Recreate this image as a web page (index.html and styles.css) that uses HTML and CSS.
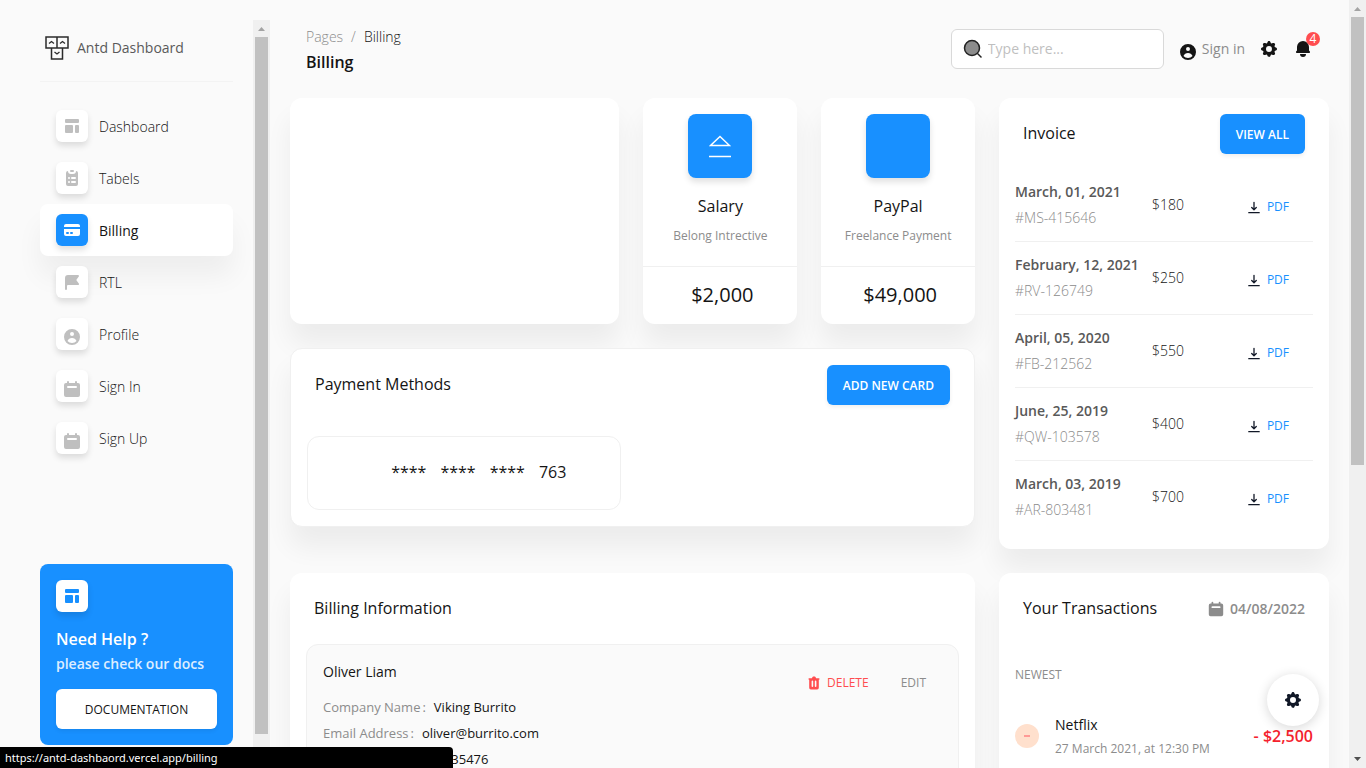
FILE: index.html
```html
<!DOCTYPE html>
<html lang="en">
<head>
<meta charset="utf-8">
<meta name="viewport" content="width=device-width, initial-scale=1">
<title>Antd Dashboard - Billing</title>
<link rel="stylesheet" href="styles.css">
</head>
<body>
<svg class="sprite" aria-hidden="true">
  <symbol id="i-dash" viewBox="0 0 20 20"><path d="M3 4a1 1 0 0 1 1-1h12a1 1 0 0 1 1 1v2a1 1 0 0 1-1 1H4a1 1 0 0 1-1-1zM3 10a1 1 0 0 1 1-1h6a1 1 0 0 1 1 1v6a1 1 0 0 1-1 1H4a1 1 0 0 1-1-1zM14 9a1 1 0 0 0-1 1v6a1 1 0 0 0 1 1h2a1 1 0 0 0 1-1v-6a1 1 0 0 0-1-1z"/></symbol>
  <symbol id="i-table" viewBox="0 0 20 20"><path d="M9 2a1 1 0 0 0 0 2h2a1 1 0 1 0 0-2z"/><path fill-rule="evenodd" d="M4 5a2 2 0 0 1 2-2 3 3 0 0 0 3 3h2a3 3 0 0 0 3-3 2 2 0 0 1 2 2v11a2 2 0 0 1-2 2H6a2 2 0 0 1-2-2zm3 4a1 1 0 0 0 0 2h.01a1 1 0 1 0 0-2zm3 0a1 1 0 0 0 0 2h3a1 1 0 1 0 0-2zm-3 4a1 1 0 1 0 0 2h.01a1 1 0 1 0 0-2zm3 0a1 1 0 1 0 0 2h3a1 1 0 1 0 0-2z"/></symbol>
  <symbol id="i-card" viewBox="0 0 20 20"><path fill-rule="evenodd" d="M4 4a2 2 0 0 0-2 2v1h16V6a2 2 0 0 0-2-2zM18 9H2v5a2 2 0 0 0 2 2h12a2 2 0 0 0 2-2zM4 13a1 1 0 0 1 1-1h1a1 1 0 1 1 0 2H5a1 1 0 0 1-1-1zm5-1a1 1 0 1 0 0 2h1a1 1 0 1 0 0-2z"/></symbol>
  <symbol id="i-flag" viewBox="0 0 20 20"><path fill-rule="evenodd" d="M3 6a3 3 0 0 1 3-3h10a1 1 0 0 1 .8 1.6L14.25 8l2.55 3.4A1 1 0 0 1 16 13H6a1 1 0 0 0-1 1v3a1 1 0 1 1-2 0z"/></symbol>
  <symbol id="i-user" viewBox="0 0 20 20"><path fill-rule="evenodd" d="M18 10a8 8 0 1 1-16 0 8 8 0 0 1 16 0zm-6-3a2 2 0 1 1-4 0 2 2 0 0 1 4 0zm-2 4a5 5 0 0 0-4.55 2.92A6 6 0 0 0 10 16a6 6 0 0 0 4.55-2.08A5 5 0 0 0 10 11z"/></symbol>
  <symbol id="i-cal" viewBox="0 0 20 20"><path fill-rule="evenodd" d="M6 2a1 1 0 0 0-1 1v1H4a2 2 0 0 0-2 2v10a2 2 0 0 0 2 2h12a2 2 0 0 0 2-2V6a2 2 0 0 0-2-2h-1V3a1 1 0 1 0-2 0v1H7V3a1 1 0 0 0-1-1zm0 5a1 1 0 0 0 0 2h8a1 1 0 1 0 0-2z"/></symbol>
  <symbol id="i-gear" viewBox="0 0 20 20"><path fill-rule="evenodd" d="M11.49 3.17c-.38-1.56-2.6-1.56-2.98 0a1.532 1.532 0 0 1-2.286.948c-1.372-.836-2.942.734-2.106 2.106.54.886.061 2.042-.947 2.287-1.561.379-1.561 2.6 0 2.978a1.532 1.532 0 0 1 .947 2.287c-.836 1.372.734 2.942 2.106 2.106a1.532 1.532 0 0 1 2.287.947c.379 1.561 2.6 1.561 2.978 0a1.533 1.533 0 0 1 2.287-.947c1.372.836 2.942-.734 2.106-2.106a1.533 1.533 0 0 1 .947-2.287c1.561-.379 1.561-2.6 0-2.978a1.532 1.532 0 0 1-.947-2.287c.836-1.372-.734-2.942-2.106-2.106a1.532 1.532 0 0 1-2.287-.947zM10 13a3 3 0 1 0 0-6 3 3 0 0 0 0 6z"/></symbol>
  <symbol id="i-bell" viewBox="0 0 20 20"><path d="M10 2a6 6 0 0 0-6 6v3.586l-.707.707A1 1 0 0 0 4 14h12a1 1 0 0 0 .707-1.707L16 11.586V8a6 6 0 0 0-6-6zM10 18a3 3 0 0 1-3-3h6a3 3 0 0 1-3 3z"/></symbol>
  <symbol id="i-down" viewBox="0 0 20 20"><path fill-rule="evenodd" d="M1 18a1 1 0 0 1 1-1h16a1 1 0 1 1 0 2H2a1 1 0 0 1-1-1zm4.800-8.700a1 1 0 0 1 1.414 0L9 11V2a1 1 0 1 1 2 0v9l1.793-1.700a1 1 0 1 1 1.414 1.414l-3.500 3.500a1 1 0 0 1-1.414 0l-3.500-3.500a1 1 0 0 1 0-1.414z"/></symbol>
  <symbol id="i-trash" viewBox="0 0 20 20"><path fill-rule="evenodd" d="M9 2a1 1 0 0 0-.894.553L7.382 4H4a1 1 0 0 0 0 2v10a2 2 0 0 0 2 2h8a2 2 0 0 0 2-2V6a1 1 0 1 0 0-2h-3.382l-.724-1.447A1 1 0 0 0 11 2zM7 8a1 1 0 0 1 2 0v6a1 1 0 1 1-2 0zm5-1a1 1 0 0 0-1 1v6a1 1 0 1 0 2 0V8a1 1 0 0 0-1-1z"/></symbol>
</svg>

<div class="app">
  <div class="side">
    <aside class="side-body">
      <a class="brand" href="#">
        <svg width="24" height="24" viewBox="0 0 24 24" fill="none" stroke="#2b2b2b" stroke-width="1.500"><path d="M1 1h11v11H1zM12 1h11v11H12zM6.500 12h11v11h-11z"/><path stroke-width="1.300" d="M4 7.500l2.500-2L9 7.500M15 7.500l2.500-2 2.500 2M9.500 16l2.500 2 2.500-2"/></svg>
        <span>Antd Dashboard</span>
      </a>
      <hr class="rule">
      <nav class="menu">
        <a href="#"><span class="tile"><svg class="ic"><use href="#i-dash"/></svg></span><span class="name">Dashboard</span></a>
        <a href="#"><span class="tile"><svg class="ic"><use href="#i-table"/></svg></span><span class="name">Tabels</span></a>
        <a href="#" class="active" aria-current="page"><span class="tile"><svg class="ic"><use href="#i-card"/></svg></span><span class="name">Billing</span></a>
        <a href="#"><span class="tile"><svg class="ic"><use href="#i-flag"/></svg></span><span class="name">RTL</span></a>
        <a href="#"><span class="tile low"><svg class="ic"><use href="#i-user"/></svg></span><span class="name">Profile</span></a>
        <a href="#"><span class="tile low"><svg class="ic"><use href="#i-cal"/></svg></span><span class="name">Sign In</span></a>
        <a href="#"><span class="tile low"><svg class="ic"><use href="#i-cal"/></svg></span><span class="name">Sign Up</span></a>
      </nav>
      <section class="help">
        <span class="tile"><svg class="ic"><use href="#i-dash"/></svg></span>
        <h6>Need Help ?</h6>
        <p>please check our docs</p>
        <button type="button" class="btn light">DOCUMENTATION</button>
      </section>
    </aside>
    <div class="bar side-bar" aria-hidden="true">
      <svg width="17" height="17" viewBox="0 0 17 17"><path d="M5 11h7L8.500 7z" fill="#a3a3a3"/></svg>
      <div class="thumb"></div>
      <div class="rest"></div>
    </div>
  </div>

  <main class="main">
    <header class="top">
      <div>
        <nav class="crumbs" aria-label="Breadcrumb"><a href="#">Pages</a><span>/</span><b>Billing</b></nav>
        <h1>Billing</h1>
      </div>
      <div class="tools">
        <label class="search">
          <svg width="20" height="20" viewBox="0 0 20 20"><circle cx="9" cy="9" r="7.500" fill="#8c8c8c" stroke="#222" stroke-width="1.500"/><path d="M14.500 14.500l4 4" stroke="#222" stroke-width="1.500"/></svg>
          <input type="text" placeholder="Type here..." aria-label="Search">
        </label>
        <a class="signin" href="#"><svg class="ic20"><use href="#i-user"/></svg><span>Sign in</span></a>
        <button type="button" class="icon-btn" aria-label="Settings"><svg class="ic20"><use href="#i-gear"/></svg></button>
        <button type="button" class="icon-btn" aria-label="Notifications"><svg class="ic20"><use href="#i-bell"/></svg><span class="badge">4</span></button>
      </div>
    </header>

    <div class="grid">
      <div class="left">
        <div class="stats">
          <section class="card"></section>
          <section class="card stat">
            <div class="big"><svg width="22" height="23" viewBox="0 0 22 23" fill="none" stroke="#fff" stroke-width="1.500"><path d="M1.500 10.500L11 1.500l9.500 9zM0 21.500h22"/></svg></div>
            <h2>Salary</h2><p>Belong Intrective</p><strong>$2,000</strong>
          </section>
          <section class="card stat">
            <div class="big"></div>
            <h2>PayPal</h2><p>Freelance Payment</p><strong>$49,000</strong>
          </section>
        </div>
        <section class="card pay">
          <div class="head"><h2>Payment Methods</h2><button type="button" class="btn">ADD NEW CARD</button></div>
          <div class="methods"><div class="method"><span>****</span><span>****</span><span>****</span><span>763</span></div></div>
        </section>
      </div>

      <section class="card invoice">
        <div class="head"><h2>Invoice</h2><button type="button" class="btn">VIEW ALL</button></div>
        <ul>
          <li><div><h3>March, 01, 2021</h3><p>#MS-415646</p></div><span>$180</span><a href="#"><svg class="ic"><use href="#i-down"/></svg>PDF</a></li>
          <li><div><h3>February, 12, 2021</h3><p>#RV-126749</p></div><span>$250</span><a href="#"><svg class="ic"><use href="#i-down"/></svg>PDF</a></li>
          <li><div><h3>April, 05, 2020</h3><p>#FB-212562</p></div><span>$550</span><a href="#"><svg class="ic"><use href="#i-down"/></svg>PDF</a></li>
          <li><div><h3>June, 25, 2019</h3><p>#QW-103578</p></div><span>$400</span><a href="#"><svg class="ic"><use href="#i-down"/></svg>PDF</a></li>
          <li><div><h3>March, 03, 2019</h3><p>#AR-803481</p></div><span>$700</span><a href="#"><svg class="ic"><use href="#i-down"/></svg>PDF</a></li>
        </ul>
      </section>

      <section class="card info">
        <div class="head"><h2>Billing Information</h2></div>
        <article class="person">
          <div>
            <h3>Oliver Liam</h3>
            <dl>
              <div><dt>Company Name</dt><dd>Viking Burrito</dd></div>
              <div><dt>Email Address</dt><dd>oliver@burrito.com</dd></div>
              <div><dt>VAT Number</dt><dd>FRB1235476</dd></div>
            </dl>
          </div>
          <div class="actions">
            <button type="button" class="link danger"><svg class="ic"><use href="#i-trash"/></svg>DELETE</button>
            <button type="button" class="link">EDIT</button>
          </div>
        </article>
      </section>

      <section class="card trans">
        <div class="head"><h2>Your Transactions</h2><span class="date"><svg class="ic18"><use href="#i-cal"/></svg>04/08/2022</span></div>
        <h4>NEWEST</h4>
        <div class="entry">
          <span class="dot" aria-hidden="true"></span>
          <div><h3>Netflix</h3><p>27 March 2021, at 12:30 PM</p></div>
          <strong>- $2,500</strong>
        </div>
      </section>
    </div>
  </main>

  <div class="bar page-bar" aria-hidden="true">
    <svg width="17" height="17" viewBox="0 0 17 17"><path d="M5 11h7L8.500 7z" fill="#a3a3a3"/></svg>
    <div class="thumb"></div>
    <div class="rest"></div>
    <svg width="17" height="17" viewBox="0 0 17 17"><path d="M5 6h7l-3.500 4z" fill="#505050"/></svg>
  </div>
</div>
<button type="button" class="fab" aria-label="Configurator"><svg class="ic20"><use href="#i-gear"/></svg></button>
<div class="status">https://antd-dashbaord.vercel.app/billing</div>
</body>
</html>
```
FILE: styles.css
```css
* { box-sizing: border-box; }
body {
  margin: 0;
  background: #fafafa;
  color: #141414;
  font-family: "Open Sans", "Noto Sans", sans-serif;
  font-size: 14px;
  line-height: 26px;
}
h1, h2, h3, h4, h6, p, ul, dl, dd { margin: 0; padding: 0; font-weight: 400; }
ul { list-style: none; }
a { color: inherit; text-decoration: none; }
button, input { font: inherit; color: inherit; }
button { border: 0; background: none; padding: 0; cursor: pointer; }
svg { flex: none; fill: currentColor; }
.sprite { position: absolute; width: 0; height: 0; }
.ic { width: 20px; height: 20px; }
.ic18 { width: 18px; height: 18px; }
.ic20 { width: 20px; height: 20px; }

.app { display: flex; height: 100vh; overflow: hidden; }

/* Sidebar */
.side { display: flex; flex: none; width: 270px; padding-top: 20px; }
.side-body { flex: 1; padding: 13px 20px 0 40px; }
.brand { display: flex; align-items: center; gap: 8px; height: 30px; padding-left: 5px; color: #595959; font-weight: 500; }
.brand svg { fill: none; }
.rule { height: 1px; margin: 18px 0; border: 0; background: #f3f3f3; }
.menu a {
  display: flex; align-items: center; gap: 11px; height: 52px; padding: 0 16px;
  border-radius: 8px; font-weight: 300;
}
.menu .name { padding-top: 2px; }
.menu a.active { background: #fff; font-weight: 400; box-shadow: 0 20px 27px rgba(0, 0, 0, .05); }
.tile {
  display: flex; align-items: center; justify-content: center; width: 32px; height: 32px;
  border-radius: 6px; background: #fff; color: #bfbfbf; box-shadow: 0 4px 6px rgba(0, 0, 0, .12);
}
.tile.low { padding-top: 5px; }
.active .tile { background: #1890ff; color: #fff; }
.help { margin-top: 100px; padding: 16px; border-radius: 8px; background: #1890ff; color: #fff; }
.help .tile { color: #1890ff; }
.help h6 { margin-top: 14px; font-size: 16px; font-weight: 600; }
.help p { height: 37px; line-height: 24px; font-weight: 600; opacity: .85; }
.btn {
  height: 40px; padding: 2px 16px 0; border-radius: 6px; background: #1890ff; color: #fff;
  font-size: 12px; font-weight: 600; box-shadow: 0 2px 4px rgba(0, 0, 0, .07);
}
.btn.light { width: 100%; background: #fff; color: #141414; font-weight: 400; }

/* Scroll tracks */
.bar { display: flex; flex-direction: column; flex: none; width: 17px; background: #f0f0f0; }
.bar svg { display: block; }
.bar .thumb { margin: 0 2px; background: #c1c1c1; }
.side-bar .thumb { flex: 697; }
.side-bar .rest { flex: 34; }
.page-bar .thumb { flex: 448; }
.page-bar .rest { flex: 286; }

/* Header */
.main { flex: 1; min-width: 0; padding: 0 20px; }
.top { display: flex; justify-content: space-between; align-items: center; padding: 24px 16px; }
.crumbs { display: flex; gap: 8px; font-weight: 300; color: #8c8c8c; }
.crumbs b { font-weight: 300; color: #141414; }
.top h1 { font-size: 16px; line-height: 24px; font-weight: 600; }
.tools { display: flex; align-items: center; color: #141414; }
.search {
  display: flex; align-items: center; gap: 5px; width: 213px; height: 40px; padding: 0 11px;
  border: 1px solid #d9d9d9; border-radius: 6px; background: #fff;
}
.search input { flex: 1; min-width: 0; padding: 0; border: 0; outline: 0; background: none; font-weight: 500; }
.search input::placeholder { color: #bfbfbf; opacity: 1; }
.signin { display: flex; align-items: center; gap: 4px; margin-left: 14px; color: #8c8c8c; font-weight: 500; }
.signin svg { color: #141414; margin-top: 5px; }
.icon-btn { display: flex; position: relative; margin-left: 14px; }
.badge {
  position: absolute; top: -7px; right: -7px; width: 14px; height: 14px; border-radius: 7px;
  background: #ff4d4f; color: #fff; font-size: 12px; line-height: 14px; text-align: center;
}

/* Cards */
.grid { display: grid; grid-template-columns: minmax(0, 685fr) minmax(0, 330fr); gap: 24px; }
.card { border-radius: 12px; background: #fff; box-shadow: 0 20px 27px rgba(0, 0, 0, .06); }
.head { display: flex; justify-content: space-between; align-items: center; min-height: 71px; padding: 16px 24px 15px; }
.head h2 { font-size: 16px; line-height: 24px; font-weight: 500; padding-bottom: 2px; }
.left { display: flex; flex-direction: column; gap: 24px; }
.stats { display: grid; grid-template-columns: minmax(0, 330fr) minmax(0, 154fr) minmax(0, 154fr); gap: 24px; }
.stat { padding-top: 16px; text-align: center; }
.big {
  display: flex; align-items: center; justify-content: center; width: 64px; height: 64px; margin: 0 auto;
  border-radius: 8px; background: #1890ff; box-shadow: 0 4px 6px rgba(0, 0, 0, .12);
}
.big svg { fill: none; }
.stat h2 { margin: 16px 0 8px; font-size: 16px; line-height: 24px; font-weight: 500; }
.stat p { font-size: 12px; line-height: 20px; color: #8c8c8c; }
.stat strong {
  display: block; margin-top: 20px; padding: 13px 0 15px 4px; border-top: 1px solid #f0f0f0;
  font-size: 20px; line-height: 29px; font-weight: 500;
}
.pay { border: 1px solid #f0f0f0; }
.methods { display: grid; grid-template-columns: 1fr 1fr; gap: 24px; padding: 16px; }
.method {
  display: flex; justify-content: center; gap: 14px; padding: 22px 0 24px 30px;
  border: 1px solid #f0f0f0; border-radius: 12px; font-size: 16px; font-weight: 500;
}

.invoice ul { padding: 0 16px 16px; }
.invoice li {
  display: grid; grid-template-columns: 137px 1fr auto; align-items: center;
  padding: 10px 24px 10px 0; border-bottom: 1px solid #f0f0f0;
}
.invoice li:last-child { border-bottom: 0; }
.invoice h3 { font-size: 14px; font-weight: 600; color: #595959; white-space: nowrap; }
.invoice p { font-weight: 300; color: #8c8c8c; }
.invoice li span { font-weight: 300; }
.invoice a { display: flex; align-items: center; gap: 4px; padding-top: 4px; font-size: 12px; color: #1890ff; }
.invoice a svg { width: 18px; height: 13px; color: #111827; }

.person {
  display: flex; justify-content: space-between; margin: 0 16px 16px; padding: 15px 32px 24px 16px;
  border: 1px solid #f0f0f0; border-radius: 12px; background: #fafafa;
}
.person h3 { margin-bottom: 10px; font-size: 14px; line-height: 24px; font-weight: 500; }
.person dl > div { display: flex; gap: 8px; font-size: 13px; font-weight: 500; }
.person dt { color: #8c8c8c; font-weight: 500; }
.person dt::after { content: ":"; margin-left: 2px; }
.actions { display: flex; align-items: flex-start; gap: 32px; padding-top: 10px; }
.link { display: flex; align-items: center; gap: 5px; font-size: 12px; color: #8c8c8c; }
.link.danger { color: #ff4d4f; }
.link svg { width: 16px; height: 16px; }

.date { display: flex; align-items: center; gap: 5px; color: #8c8c8c; font-weight: 600; }
.trans h4 { padding: 17px 16px 0; font-size: 12px; line-height: 28px; font-weight: 500; color: #8c8c8c; }
.entry { display: grid; grid-template-columns: 24px 1fr auto; gap: 16px; align-items: center; padding: 23px 16px 16px; }
.entry h3 { font-size: 14px; font-weight: 500; }
.entry p { padding-top: 1px; font-size: 12px; line-height: 20px; color: #8c8c8c; }
.entry strong { font-size: 16px; font-weight: 600; color: #f5222d; }
.dot { display: flex; align-items: center; justify-content: center; height: 24px; border-radius: 12px; background: #ffe0cd; }
.dot::before { content: ""; width: 6px; height: 2px; background: #ff9a96; }

.fab {
  position: fixed; right: 47px; bottom: 42px; display: flex; align-items: center; justify-content: center;
  width: 52px; height: 52px; border-radius: 26px; background: #fff; color: #111827;
  box-shadow: 0 2px 12px rgba(0, 0, 0, .16);
}
.status {
  position: fixed; left: 0; bottom: 0; width: 453px; padding: 0 5px; border-radius: 0 4px 0 0;
  background: #000; color: #fff; font-family: "Noto Sans", sans-serif; font-size: 11px; line-height: 21px;
}
```
